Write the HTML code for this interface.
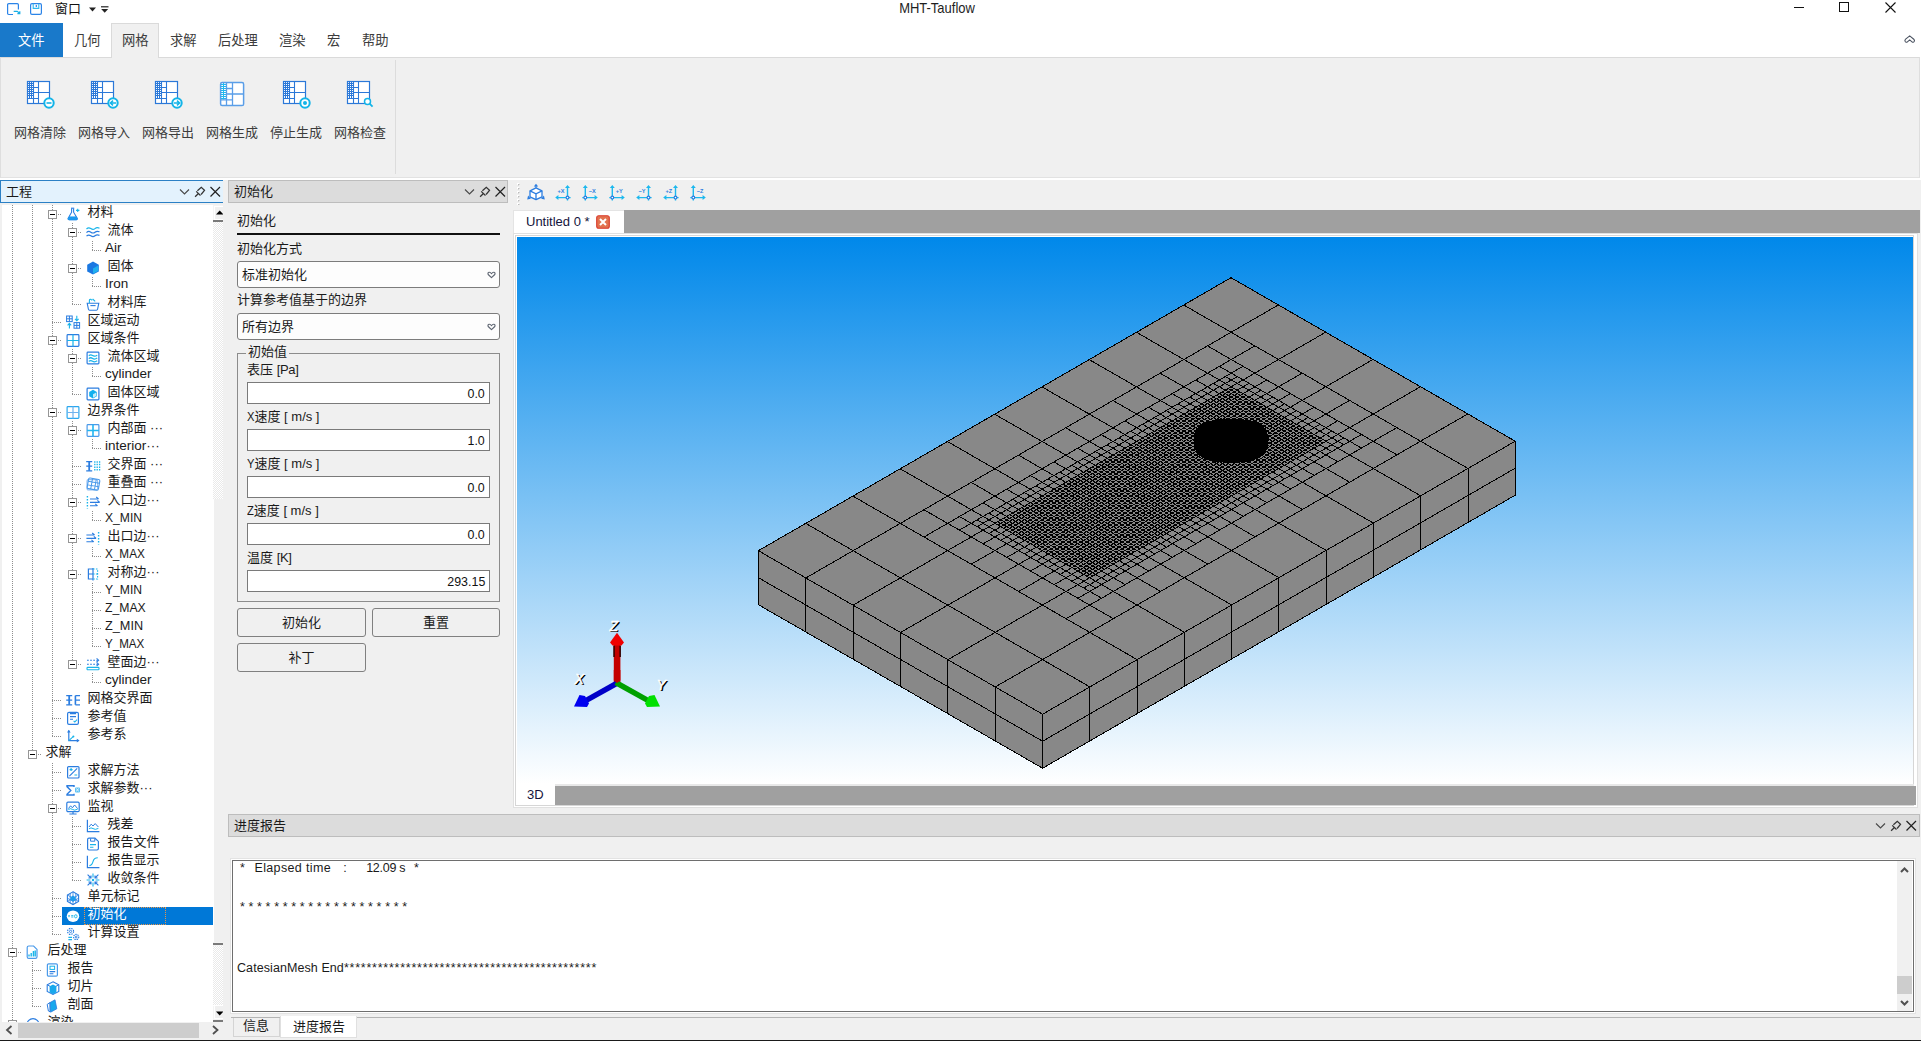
<!DOCTYPE html>
<html lang="zh-CN"><head><meta charset="utf-8"><title>MHT-Tauflow</title>
<style>
*{box-sizing:border-box;margin:0;padding:0}
html,body{width:1921px;height:1041px;overflow:hidden;background:#fff}
body{position:relative;font-family:"Liberation Sans","Noto Sans CJK SC",sans-serif;font-size:13px;color:#1a1a1a;line-height:1}
.a{position:absolute}
.t{position:absolute;white-space:nowrap;line-height:18px;height:18px}
svg{position:absolute;overflow:visible}
.rl{position:absolute;top:124px;width:64px;text-align:center;font-size:13px;line-height:18px;color:#3c3c3c;white-space:nowrap}
.tab{position:absolute;top:32px;height:18px;line-height:18px;font-size:13.3px;color:#3c3c3c;white-space:nowrap}
.hdr{position:absolute;font-size:13px;line-height:18px;white-space:nowrap;color:#1a1a1a}
.inp{position:absolute;left:247px;width:243px;height:22px;background:#fff;border:1px solid #7a7a7a;text-align:right;padding-right:4px;font-size:13.5px;line-height:21px;color:#111}
.inp span{display:inline-block;transform:scaleX(.92);transform-origin:100% 50%}
.lab{position:absolute;font-size:13px;line-height:18px;white-space:nowrap;color:#1a1a1a}
.btn{position:absolute;height:29px;border:1px solid #808080;border-radius:3px;background:#f0f0f0;text-align:center;font-size:13px;line-height:27px;color:#1a1a1a}
.cmb{position:absolute;left:237px;width:263px;height:27px;border:1px solid #7c7c7c;border-radius:3px;background:#fdfdfd;font-size:13px;line-height:25px;padding-left:4px;color:#1a1a1a}
.tr{position:absolute;white-space:nowrap;font-size:13px;line-height:18px;height:18px;color:#1a1a1a}
.log{position:absolute;left:237px;font-size:12.5px;line-height:18px;white-space:pre;color:#1a1a1a}
</style></head>
<body>
<div class="a" style="left:0;top:178px;width:1921px;height:863px;background:#f0f0f0"></div>
<div class="a" style="left:0;top:178px;width:1921px;height:2px;background:#fff"></div>
<div class="a" style="left:228px;top:180px;width:280px;height:23px;background:#dcdcdc;border:1px solid #bdbdbd"></div>
<div class="hdr" style="left:234px;top:183px">初始化</div>
<svg style="left:463px;top:186px" width="44" height="12" viewBox="0 0 44 12"><path d="M2 3.500L6.500 8L11 3.500" fill="none" stroke="#4a4a4a" stroke-width="1.150"/><path d="M17.100 10.800L20.700 7.200M18.200 5.400L22.500 9.500M19.400 4.800L23.300 1.400L26.500 4.300L23.100 8.500" fill="none" stroke="#333" stroke-width="1.25"/><path d="M32.500 1L42 10.500M42 1L32.500 10.500" stroke="#222" stroke-width="1.2"/></svg>
<div class="lab" style="left:237px;top:211.5px">初始化</div>
<div class="a" style="left:237px;top:233px;width:263px;height:2px;background:#111"></div>
<div class="lab" style="left:237px;top:239.5px">初始化方式</div>
<div class="cmb" style="top:261px">标准初始化</div><svg style="left:486.6px;top:270.9px" width="9" height="8" viewBox="0 0 9 8"><path d="M4.500 6.700L1.200 3.500Q0.500 1.700 2 1.300Q3.500 1.100 4.500 2.700Q5.500 1.100 7 1.300Q8.500 1.700 7.800 3.500Z" fill="#fff" stroke="#5f6672" stroke-width="1.150" stroke-linejoin="round"/></svg>
<div class="lab" style="left:237px;top:291px">计算参考值基于的边界</div>
<div class="cmb" style="top:313px">所有边界</div><svg style="left:486.6px;top:322.9px" width="9" height="8" viewBox="0 0 9 8"><path d="M4.500 6.700L1.200 3.500Q0.500 1.700 2 1.300Q3.500 1.100 4.500 2.700Q5.500 1.100 7 1.300Q8.500 1.700 7.800 3.500Z" fill="#fff" stroke="#5f6672" stroke-width="1.150" stroke-linejoin="round"/></svg>
<div class="a" style="left:237px;top:353px;width:263px;height:249px;border:1px solid #8c8c8c"></div>
<div class="lab" style="left:246px;top:343px;background:#f0f0f0;padding:0 2px">初始值</div>
<div class="lab" style="left:247px;top:360.5px">表压 <span style="letter-spacing:-0.3px">[Pa]</span></div>
<div class="inp" style="top:382px"><span>0.0</span></div>
<div class="lab" style="left:247px;top:407.5px"><span style="display:inline-block;transform:scaleX(.86);transform-origin:0 50%;margin-right:-1.2px">X</span>速度 [ m/s ]</div>
<div class="inp" style="top:429px"><span>1.0</span></div>
<div class="lab" style="left:247px;top:454.5px"><span style="display:inline-block;transform:scaleX(.86);transform-origin:0 50%;margin-right:-1.2px">Y</span>速度 [ m/s ]</div>
<div class="inp" style="top:476px"><span>0.0</span></div>
<div class="lab" style="left:247px;top:501.5px"><span style="display:inline-block;transform:scaleX(.86);transform-origin:0 50%;margin-right:-1.2px">Z</span>速度 [ m/s ]</div>
<div class="inp" style="top:523px"><span>0.0</span></div>
<div class="lab" style="left:247px;top:548.5px">温度 <span style="letter-spacing:-0.3px">[K]</span></div>
<div class="inp" style="top:570px"><span>293.15</span></div>
<div class="btn" style="left:237px;top:608px;width:129px">初始化</div>
<div class="btn" style="left:372px;top:608px;width:128px">重置</div>
<div class="btn" style="left:237px;top:643px;width:129px">补丁</div>
<div class="a" style="left:0;top:0;width:1921px;height:57px;background:#fff"></div>
<svg style="left:7px;top:3px" width="14" height="13" viewBox="0 0 14 13"><path d="M6 11.5H1.8Q0.6 11.5 0.6 10.3V1.8Q0.6 0.6 1.8 0.6H10.2Q11.4 0.6 11.4 1.8V6.5" fill="none" stroke="#2b84e8" stroke-width="1.2"/><path d="M6.700 8.300H10.200L12.600 10.300M12.800 8.200V10.600H10.400" fill="none" stroke="#17aee6" stroke-width="1.200"/></svg>
<svg style="left:30px;top:3px" width="13" height="13" viewBox="0 0 13 13"><rect x="0.6" y="0.6" width="10.8" height="10.8" rx="1.4" fill="#fff" stroke="#2b84e8" stroke-width="1.2"/><path d="M3.2 0.8V5.4H8.8V0.8" fill="none" stroke="#2fb9ee" stroke-width="1.1"/><path d="M6.3 2V4" stroke="#2b84e8" stroke-width="1.2"/></svg>
<div class="t" style="left:55px;top:0px;font-size:13px;color:#111">窗口</div>
<svg style="left:88px;top:6px" width="22" height="8" viewBox="0 0 22 8"><path d="M1 1.5H8L4.5 5.5Z" fill="#222"/><path d="M13 0.8H20.5" stroke="#222" stroke-width="1.2"/><path d="M13.2 3H20.2L16.7 6.8Z" fill="#222"/></svg>
<div class="t" style="left:837px;top:-2.3px;width:200px;text-align:center;font-size:15px;line-height:20px;height:20px;color:#1e1e1e;transform:scaleX(.865)">MHT-Tauflow</div>
<svg style="left:1790px;top:0" width="110" height="16" viewBox="0 0 110 16"><path d="M4 7.5H14" stroke="#111" stroke-width="1"/><rect x="49.5" y="2.5" width="9" height="9" fill="none" stroke="#111" stroke-width="1"/><path d="M95.500 2.500L105.500 12.500M105.500 2.500L95.500 12.500" stroke="#111" stroke-width="1.1"/></svg>
<svg style="left:1904px;top:35px" width="12" height="9" viewBox="0 0 12 9"><path d="M1.2 6.5Q0.4 5.2 1.6 4.2L5.7 0.9L9.8 4.2Q11 5.2 10.2 6.5Q9.2 7.8 8 6.8L5.7 4.9L3.4 6.8Q2.2 7.8 1.2 6.5Z" fill="none" stroke="#4a5260" stroke-width="1.1"/></svg>
<div class="a" style="left:0;top:23px;width:63px;height:34.5px;background:#1979ca"></div>
<div class="tab" style="left:18px;color:#fff">文件</div>
<div class="a" style="left:0;top:57px;width:1920px;height:121px;background:#f0f0f0;border-top:1px solid #dadada;border-left:1px solid #dedede;border-right:1px solid #dedede;border-bottom:1px solid #e2e2e2"></div>
<div class="a" style="left:111px;top:23px;width:48px;height:35px;background:#f0f0f0;border:1px solid #dadada;border-bottom:none"></div>
<div class="tab" style="left:74px">几何</div>
<div class="tab" style="left:122px">网格</div>
<div class="tab" style="left:170px">求解</div>
<div class="tab" style="left:218px">后处理</div>
<div class="tab" style="left:279px">渲染</div>
<div class="tab" style="left:327px">宏</div>
<div class="tab" style="left:362px">帮助</div>
<svg style="left:27px;top:81px" width="34" height="34" viewBox="0 0 34 34"><rect x="0.5" y="0.5" width="22" height="22" fill="#fff" stroke="#2b78d8" stroke-width="1.2"/><g stroke="#2b78d8" stroke-width="1" fill="none"><path d="M2.5 1V17.5"/><path d="M4.5 1V17.5"/><path d="M1 2.5H6.5"/><path d="M1 4.5H6.5"/><path d="M1 6.5H6.5"/><path d="M1 8.5H6.5"/><path d="M1 10.5H6.5"/><path d="M1 12.5H6.5"/><path d="M1 14.5H6.5"/><path d="M6.5 1V22.5M11.5 1V22.5M1 17.5H11.5M6.5 6.5H11.5M6.5 11.5H22.5" stroke-width="1.1"/></g><circle cx="22" cy="22" r="4.7" fill="#fff" stroke="#13b4e8" stroke-width="2"/><path d="M19.5 22H24.5" stroke="#13b4e8" stroke-width="1.6"/></svg>
<div class="rl" style="left:8px">网格清除</div>
<svg style="left:91px;top:81px" width="34" height="34" viewBox="0 0 34 34"><rect x="0.5" y="0.5" width="22" height="22" fill="#fff" stroke="#2b78d8" stroke-width="1.2"/><g stroke="#2b78d8" stroke-width="1" fill="none"><path d="M2.5 1V17.5"/><path d="M4.5 1V17.5"/><path d="M1 2.5H6.5"/><path d="M1 4.5H6.5"/><path d="M1 6.5H6.5"/><path d="M1 8.5H6.5"/><path d="M1 10.5H6.5"/><path d="M1 12.5H6.5"/><path d="M1 14.5H6.5"/><path d="M6.5 1V22.5M11.5 1V22.5M1 17.5H11.5M6.5 6.5H11.5M6.5 11.5H22.5" stroke-width="1.1"/></g><circle cx="22" cy="22" r="4.7" fill="#fff" stroke="#13b4e8" stroke-width="2"/><path d="M25 22H20M22 19.6L19.4 22L22 24.4" stroke="#13b4e8" stroke-width="1.5" fill="none"/></svg>
<div class="rl" style="left:72px">网格导入</div>
<svg style="left:155px;top:81px" width="34" height="34" viewBox="0 0 34 34"><rect x="0.5" y="0.5" width="22" height="22" fill="#fff" stroke="#2b78d8" stroke-width="1.2"/><g stroke="#2b78d8" stroke-width="1" fill="none"><path d="M2.5 1V17.5"/><path d="M4.5 1V17.5"/><path d="M1 2.5H6.5"/><path d="M1 4.5H6.5"/><path d="M1 6.5H6.5"/><path d="M1 8.5H6.5"/><path d="M1 10.5H6.5"/><path d="M1 12.5H6.5"/><path d="M1 14.5H6.5"/><path d="M6.5 1V22.5M11.5 1V22.5M1 17.5H11.5M6.5 6.5H11.5M6.5 11.5H22.5" stroke-width="1.1"/></g><circle cx="22" cy="22" r="4.7" fill="#fff" stroke="#13b4e8" stroke-width="2"/><path d="M19 22H24M22 19.6L24.6 22L22 24.4" stroke="#13b4e8" stroke-width="1.5" fill="none"/></svg>
<div class="rl" style="left:136px">网格导出</div>
<svg style="left:220px;top:81px" width="34" height="34" viewBox="0 0 34 34"><rect x="0.600" y="1.600" width="23" height="23" rx="1.600" fill="#fff" stroke="#5a9ee8" stroke-width="1.500"/><g stroke="#22b8ee" stroke-width="1" fill="none"><path d="M3.500 2V18.500"/><path d="M1 3.5H6.500"/><path d="M1 5.5H6.500"/><path d="M1 7.5H6.500"/><path d="M1 9.5H6.500"/><path d="M1 11.5H6.500"/><path d="M1 13.5H6.500"/><path d="M1 15.5H6.500"/><path d="M1 17.5H6.500"/></g><g stroke="#5a9ee8" stroke-width="1.300" fill="none"><path d="M12.500 2V24.500M6.500 2V24.500M12.500 13H23.500M6.500 7.500H12.500M6.500 13H12.500M1 18.800H12.500"/></g></svg>
<div class="rl" style="left:200px">网格生成</div>
<svg style="left:283px;top:81px" width="34" height="34" viewBox="0 0 34 34"><rect x="0.5" y="0.5" width="22" height="22" fill="#fff" stroke="#2b78d8" stroke-width="1.2"/><g stroke="#2b78d8" stroke-width="1" fill="none"><path d="M2.5 1V17.5"/><path d="M4.5 1V17.5"/><path d="M1 2.5H6.5"/><path d="M1 4.5H6.5"/><path d="M1 6.5H6.5"/><path d="M1 8.5H6.5"/><path d="M1 10.5H6.5"/><path d="M1 12.5H6.5"/><path d="M1 14.5H6.5"/><path d="M6.5 1V22.5M11.5 1V22.5M1 17.5H11.5M6.5 6.5H11.5M6.5 11.5H22.5" stroke-width="1.1"/></g><circle cx="22" cy="22" r="4.7" fill="#fff" stroke="#13b4e8" stroke-width="2"/><circle cx="22" cy="22" r="2" fill="#13b4e8"/></svg>
<div class="rl" style="left:264px">停止生成</div>
<svg style="left:347px;top:81px" width="34" height="34" viewBox="0 0 34 34"><rect x="0.5" y="0.5" width="22" height="22" fill="#fff" stroke="#2b78d8" stroke-width="1.2"/><g stroke="#2b78d8" stroke-width="1" fill="none"><path d="M2.5 1V17.5"/><path d="M4.5 1V17.5"/><path d="M1 2.5H6.5"/><path d="M1 4.5H6.5"/><path d="M1 6.5H6.5"/><path d="M1 8.5H6.5"/><path d="M1 10.5H6.5"/><path d="M1 12.5H6.5"/><path d="M1 14.5H6.5"/><path d="M6.5 1V22.5M11.5 1V22.5M1 17.5H11.5M6.5 6.5H11.5M6.5 11.5H22.5" stroke-width="1.1"/></g><circle cx="20.5" cy="20.5" r="3" fill="#fff" stroke="#13b4e8" stroke-width="1.5"/><path d="M22.8 22.8L25.6 25.6" stroke="#13b4e8" stroke-width="1.8"/></svg>
<div class="rl" style="left:328px">网格检查</div>
<div class="a" style="left:395px;top:60px;width:1px;height:114px;background:#dcdcdc"></div>
<div class="a" style="left:0;top:180px;width:223px;height:23px;background:#e3f2fd;border:1px solid #2b80c5;border-right:none"></div>
<div class="hdr" style="left:6px;top:183px">工程</div>
<svg style="left:178px;top:186px" width="44" height="12" viewBox="0 0 44 12"><path d="M2 3.500L6.500 8L11 3.500" fill="none" stroke="#4a4a4a" stroke-width="1.150"/><path d="M17.100 10.800L20.700 7.200M18.200 5.400L22.500 9.500M19.400 4.800L23.300 1.400L26.500 4.300L23.100 8.500" fill="none" stroke="#333" stroke-width="1.25"/><path d="M32.500 1L42 10.500M42 1L32.500 10.500" stroke="#222" stroke-width="1.2"/></svg>
<div class="a" style="left:2px;top:205px;width:221px;height:817px;background:#fff;overflow:hidden"></div>
<div class="a" id="treeclip" style="left:0;top:205px;width:213px;height:817px;overflow:hidden">
<div class="a" style="left:0;top:-205px;width:214px;height:1100px">
<div class="a" style="left:62px;top:907px;width:151px;height:18px;background:#0078d7"></div>
<div class="a" style="left:84px;top:907px;width:82px;height:18px;border:1px dotted #e8964a"></div>
<svg style="left:0;top:0" width="214" height="1100" shape-rendering="crispEdges"><path d="M12.5 205V1022M32.5 205V754M32.5 961V1006M52.5 205V736M52.5 763V934M72.5 223V304M72.5 349V394M72.5 421V664M72.5 817V880M92.5 241V250M92.5 277V286M92.5 367V376M92.5 439V448M92.5 511V520M92.5 547V556M92.5 583V646M92.5 673V682M58.0 214H61.0M78.0 232H81.0M92.0 250H101.0M78.0 268H81.0M92.0 286H101.0M72.0 304H81.0M52.0 322H61.0M58.0 340H61.0M78.0 358H81.0M92.0 376H101.0M72.0 394H81.0M58.0 412H61.0M78.0 430H81.0M92.0 448H101.0M72.0 466H81.0M72.0 484H81.0M78.0 502H81.0M92.0 520H101.0M78.0 538H81.0M92.0 556H101.0M78.0 574H81.0M92.0 592H101.0M92.0 610H101.0M92.0 628H101.0M92.0 646H101.0M78.0 664H81.0M92.0 682H101.0M52.0 700H61.0M52.0 718H61.0M52.0 736H61.0M38.0 754H41.0M52.0 772H61.0M52.0 790H61.0M58.0 808H61.0M72.0 826H81.0M72.0 844H81.0M72.0 862H81.0M72.0 880H81.0M52.0 898H61.0M52.0 916H61.0M52.0 934H61.0M18.0 952H21.0M32.0 970H41.0M32.0 988H41.0M32.0 1006H41.0M18.0 1024H21.0" fill="none" stroke="#8e8e8e" stroke-width="1" stroke-dasharray="1 1"/></svg>
<div class="a" style="left:48.0px;top:209.5px;width:9px;height:9px;border:1px solid #969696;background:#fff"></div><div class="a" style="left:50.0px;top:213.5px;width:5px;height:1px;background:#000"></div>
<svg style="left:66.0px;top:207px" width="14" height="14" viewBox="0 0 14 14"><path d="M5 1.2H8.2" stroke="#2b7de0" stroke-width="1.1"/><path d="M5.6 1.4V5.2L2.2 11.2Q1.7 12.6 3.1 12.6H10.3Q11.7 12.6 11.2 11.2L7.6 5.2V1.4" fill="none" stroke="#2b7de0" stroke-width="1.1"/><path d="M3.200 9.800H10.200L11.200 11.400Q11.500 12.800 10.300 12.800H3.100Q1.900 12.800 2.200 11.400Z" fill="#1a9af0" stroke="#1a9af0" stroke-width="0.600"/><path d="M10 3.4H13.4M11.7 1.7V5.1" stroke="#18b4ea" stroke-width="1.1"/></svg>
<div class="tr" style="left:87.5px;top:203px">材料</div>
<div class="a" style="left:68.0px;top:227.5px;width:9px;height:9px;border:1px solid #969696;background:#fff"></div><div class="a" style="left:70.0px;top:231.5px;width:5px;height:1px;background:#000"></div>
<svg style="left:86.0px;top:225px" width="14" height="14" viewBox="0 0 14 14"><path d="M0.5 4Q2.5 2 4.8 3.6T9 3.6T13.5 3.2" fill="none" stroke="#18b4ea" stroke-width="1.2"/><path d="M0.5 7.6Q2.5 5.6 4.8 7.2T9 7.2T13.5 6.8M0.5 11.2Q2.5 9.2 4.8 10.8T9 10.8T13.5 10.4" fill="none" stroke="#2b7de0" stroke-width="1.2"/></svg>
<div class="tr" style="left:107.5px;top:221px">流体</div>
<div class="tr" style="left:105.0px;top:239px;font-size:13.5px;transform-origin:0 50%;transform:scaleX(1)">Air</div>
<div class="a" style="left:68.0px;top:263.5px;width:9px;height:9px;border:1px solid #969696;background:#fff"></div><div class="a" style="left:70.0px;top:267.5px;width:5px;height:1px;background:#000"></div>
<svg style="left:86.0px;top:261px" width="14" height="14" viewBox="0 0 14 14"><path d="M7 0.6L12.8 3.8V10.4L7 13.6L1.2 10.4V3.8Z" fill="#1b78e2"/><path d="M7 7.4L12.2 4.6V10L7 12.8Z" fill="#20b0ee"/></svg>
<div class="tr" style="left:107.5px;top:257px">固体</div>
<div class="tr" style="left:105.0px;top:275px;font-size:13.5px;transform-origin:0 50%;transform:scaleX(1)">Iron</div>
<svg style="left:86.0px;top:297px" width="14" height="14" viewBox="0 0 14 14"><path d="M1.2 6.2H12.8L11.6 12.2Q11.4 13.2 10.4 13.2H3.6Q2.6 13.2 2.4 12.2Z" fill="none" stroke="#2b7de0" stroke-width="1.1"/><path d="M4.4 8.6H9.6" stroke="#2b7de0" stroke-width="1.1"/><path d="M3.4 6V3.6Q3.4 2 5 2.4L6.2 3.4M6.6 2L9.2 4.4" fill="none" stroke="#18b4ea" stroke-width="1.1"/></svg>
<div class="tr" style="left:107.5px;top:293px">材料库</div>
<svg style="left:66.0px;top:315px" width="14" height="14" viewBox="0 0 14 14"><rect x="0.6" y="1" width="5.6" height="5.6" fill="none" stroke="#2b7de0" stroke-width="1"/><path d="M3.4 1V6.6M0.6 3.8H6.2" stroke="#2b7de0" stroke-width="1"/><rect x="8" y="7.6" width="5.6" height="5.6" fill="none" stroke="#2b7de0" stroke-width="1"/><path d="M10.8 7.6V13.2M8 10.4H13.6" stroke="#2b7de0" stroke-width="1"/><path d="M10.8 0.8V5.6M9 3.8L10.8 5.8L12.6 3.8M3.4 13.4V8.6M1.6 10.4L3.4 8.4L5.2 10.4" fill="none" stroke="#18b4ea" stroke-width="1.1"/></svg>
<div class="tr" style="left:87.5px;top:311px">区域运动</div>
<div class="a" style="left:48.0px;top:335.5px;width:9px;height:9px;border:1px solid #969696;background:#fff"></div><div class="a" style="left:50.0px;top:339.5px;width:5px;height:1px;background:#000"></div>
<svg style="left:66.0px;top:333px" width="14" height="14" viewBox="0 0 14 14"><rect x="1.1" y="1.6" width="11.8" height="11.8" rx="0.8" fill="#fff" stroke="#2b7de0" stroke-width="1.2"/><path d="M7 1.6V13.4M1.1 7.5H12.9" stroke="#18b4ea" stroke-width="1.2"/></svg>
<div class="tr" style="left:87.5px;top:329px">区域条件</div>
<div class="a" style="left:68.0px;top:353.5px;width:9px;height:9px;border:1px solid #969696;background:#fff"></div><div class="a" style="left:70.0px;top:357.5px;width:5px;height:1px;background:#000"></div>
<svg style="left:86.0px;top:351px" width="14" height="14" viewBox="0 0 14 14"><rect x="1.1" y="1.1" width="11.8" height="11.8" rx="0.8" fill="#fff" stroke="#2b7de0" stroke-width="1.2"/><path d="M2.800 4.800Q4.600 3.200 6.600 4.600T11.200 4.200M2.800 7.600Q4.600 6 6.600 7.400T11.200 7M2.800 10.400Q4.600 8.800 6.600 10.200T11.200 9.800" fill="none" stroke="#18b4ea" stroke-width="1.250"/></svg>
<div class="tr" style="left:107.5px;top:347px">流体区域</div>
<div class="tr" style="left:105.0px;top:365px;font-size:13.5px;transform-origin:0 50%;transform:scaleX(1)">cylinder</div>
<svg style="left:86.0px;top:387px" width="14" height="14" viewBox="0 0 14 14"><rect x="1.1" y="1.1" width="11.8" height="11.8" rx="0.8" fill="#fff" stroke="#2b7de0" stroke-width="1.2"/><path d="M7 2.800L10.800 4.900V9.300L7 11.400L3.200 9.300V4.900Z" fill="#12b0ee"/><path d="M7 7.2L10.2 5.4V9L7 10.8Z" fill="#fff" opacity=".75"/></svg>
<div class="tr" style="left:107.5px;top:383px">固体区域</div>
<div class="a" style="left:48.0px;top:407.5px;width:9px;height:9px;border:1px solid #969696;background:#fff"></div><div class="a" style="left:50.0px;top:411.5px;width:5px;height:1px;background:#000"></div>
<svg style="left:66.0px;top:405px" width="14" height="14" viewBox="0 0 14 14"><rect x="1.1" y="1.6" width="11.8" height="11.8" rx="0.8" fill="#fff" stroke="#2aa7ee" stroke-width="1.2"/><path d="M7 1.6V13.4M1.1 7.5H12.9" stroke="#6fb2ee" stroke-width="1.2"/></svg>
<div class="tr" style="left:87.5px;top:401px">边界条件</div>
<div class="a" style="left:68.0px;top:425.5px;width:9px;height:9px;border:1px solid #969696;background:#fff"></div><div class="a" style="left:70.0px;top:429.5px;width:5px;height:1px;background:#000"></div>
<svg style="left:86.0px;top:423px" width="14" height="14" viewBox="0 0 14 14"><rect x="1.100" y="1.600" width="11.800" height="11.800" rx="0.800" fill="#fff" stroke="#4a9aea" stroke-width="1.200"/><path d="M7 1.600V13.400M1.100 7.500H12.900" stroke="#22b6f0" stroke-width="1.600"/></svg>
<div class="tr" style="left:107.5px;top:419px">内部面 ···</div>
<div class="tr" style="left:105.0px;top:437px;font-size:13.5px;transform-origin:0 50%;transform:scaleX(1)">interior···</div>
<svg style="left:86.0px;top:459px" width="14" height="14" viewBox="0 0 14 14"><path d="M0.200 2.600H6.200M0.200 11.800H6.200M0.200 7.200H6.200" stroke="#2b7de0" stroke-width="1.200"/><path d="M3.200 2.600V11.800" stroke="#2b7de0" stroke-width="1.800"/><path d="M8.800 2.200V12.200M11.200 2.200V12.200M13.600 2.200V12.200" stroke="#18b4ea" stroke-width="1.300" stroke-dasharray="1.500 1.100"/></svg>
<div class="tr" style="left:107.5px;top:455px">交界面 ···</div>
<svg style="left:86.0px;top:477px" width="14" height="14" viewBox="0 0 14 14"><rect x="1" y="2.600" width="10.600" height="10.400" rx="1.400" fill="none" stroke="#8fbdf2" stroke-width="1.100"/><g transform="rotate(10 7 7)"><rect x="1.800" y="1.600" width="11.400" height="10.800" rx="1.400" fill="none" stroke="#4a9aea" stroke-width="1.100"/><path d="M1.800 5.200H13.200M1.800 8.800H13.200M5.600 1.600V12.400M9.400 1.600V12.400" stroke="#4a9aea" stroke-width="1"/></g></svg>
<div class="tr" style="left:107.5px;top:473px">重叠面 ···</div>
<div class="a" style="left:68.0px;top:497.5px;width:9px;height:9px;border:1px solid #969696;background:#fff"></div><div class="a" style="left:70.0px;top:501.5px;width:5px;height:1px;background:#000"></div>
<svg style="left:86.0px;top:495px" width="14" height="14" viewBox="0 0 14 14"><path d="M1.4 1V13.4" stroke="#18b4ea" stroke-width="1.4" stroke-dasharray="1.6 1.4"/><path d="M4 4H12.4M10.2 2L12.6 4M4 7.4H13.6M11.4 5.4L13.8 7.4M4 10.8H11.4M9.2 8.8L11.6 10.8" fill="none" stroke="#2b7de0" stroke-width="1.1"/></svg>
<div class="tr" style="left:107.5px;top:491px">入口边···</div>
<div class="tr" style="left:105.0px;top:509px;font-size:13.5px;transform-origin:0 50%;transform:scaleX(0.9)">X_MIN</div>
<div class="a" style="left:68.0px;top:533.5px;width:9px;height:9px;border:1px solid #969696;background:#fff"></div><div class="a" style="left:70.0px;top:537.5px;width:5px;height:1px;background:#000"></div>
<svg style="left:86.0px;top:531px" width="14" height="14" viewBox="0 0 14 14"><path d="M12.6 1V13.4" stroke="#18b4ea" stroke-width="1.4" stroke-dasharray="1.6 1.4"/><path d="M0.4 4H8.4M6.2 2L8.6 4M0.4 7.4H10M7.8 5.4L10.2 7.4M0.4 10.8H7.6M5.4 8.8L7.8 10.8" fill="none" stroke="#2b7de0" stroke-width="1.1"/></svg>
<div class="tr" style="left:107.5px;top:527px">出口边···</div>
<div class="tr" style="left:105.0px;top:545px;font-size:13.5px;transform-origin:0 50%;transform:scaleX(0.87)">X_MAX</div>
<div class="a" style="left:68.0px;top:569.5px;width:9px;height:9px;border:1px solid #969696;background:#fff"></div><div class="a" style="left:70.0px;top:573.5px;width:5px;height:1px;background:#000"></div>
<svg style="left:86.0px;top:567px" width="14" height="14" viewBox="0 0 14 14"><path d="M7 2H2.4V12H7M2.4 7H7M7 1V13.4" fill="none" stroke="#2b7de0" stroke-width="1.2"/><path d="M7 2H11.6V12H7M7 7H11.6" fill="none" stroke="#18b4ea" stroke-width="1.1" stroke-dasharray="1.6 1.3"/></svg>
<div class="tr" style="left:107.5px;top:563px">对称边···</div>
<div class="tr" style="left:105.0px;top:581px;font-size:13.5px;transform-origin:0 50%;transform:scaleX(0.9)">Y_MIN</div>
<div class="tr" style="left:105.0px;top:599px;font-size:13.5px;transform-origin:0 50%;transform:scaleX(0.905)">Z_MAX</div>
<div class="tr" style="left:105.0px;top:617px;font-size:13.5px;transform-origin:0 50%;transform:scaleX(0.94)">Z_MIN</div>
<div class="tr" style="left:105.0px;top:635px;font-size:13.5px;transform-origin:0 50%;transform:scaleX(0.86)">Y_MAX</div>
<div class="a" style="left:68.0px;top:659.5px;width:9px;height:9px;border:1px solid #969696;background:#fff"></div><div class="a" style="left:70.0px;top:663.5px;width:5px;height:1px;background:#000"></div>
<svg style="left:86.0px;top:657px" width="14" height="14" viewBox="0 0 14 14"><path d="M1 3.2H12M1 7.2H12" stroke="#2b7de0" stroke-width="1.1" stroke-dasharray="1.8 1.3"/><path d="M10.6 1.4L12.6 3.2L10.6 5M10.6 5.4L12.6 7.2L10.6 9" fill="none" stroke="#2b7de0" stroke-width="1.1"/><rect x="1" y="10.4" width="12" height="2.4" rx="0.8" fill="#fff" stroke="#18b4ea" stroke-width="1.1"/></svg>
<div class="tr" style="left:107.5px;top:653px">壁面边···</div>
<div class="tr" style="left:105.0px;top:671px;font-size:13.5px;transform-origin:0 50%;transform:scaleX(1)">cylinder</div>
<svg style="left:66.0px;top:693px" width="14" height="14" viewBox="0 0 14 14"><path d="M0.200 2.600H6.200M0.200 11.800H6.200M0.200 7.200H6.200" stroke="#2b7de0" stroke-width="1.200"/><path d="M3.200 2.600V11.800" stroke="#2b7de0" stroke-width="1.800"/><path d="M9.400 2.600V11.800" stroke="#2b7de0" stroke-width="1.600"/><path d="M9.400 2.600H14M9.400 7.200H14M9.400 11.800H14" fill="none" stroke="#2b7de0" stroke-width="1.200"/></svg>
<div class="tr" style="left:87.5px;top:689px">网格交界面</div>
<svg style="left:66.0px;top:711px" width="14" height="14" viewBox="0 0 14 14"><rect x="1.6" y="1.4" width="10.8" height="12" rx="1.4" fill="#fff" stroke="#2b7de0" stroke-width="1.2"/><path d="M4.4 1.2V2.6H9.6V1.2" fill="none" stroke="#2b7de0" stroke-width="1.1"/><path d="M4 5.6H10M4 8.2H7" stroke="#2b7de0" stroke-width="1.1"/><path d="M7.6 9.8L8.8 11L11 8.6" fill="none" stroke="#18b4ea" stroke-width="1.1"/></svg>
<div class="tr" style="left:87.5px;top:707px">参考值</div>
<svg style="left:66.0px;top:729px" width="14" height="14" viewBox="0 0 14 14"><path d="M2.8 1.4V11.6H12.4" fill="none" stroke="#2b7de0" stroke-width="1.2"/><path d="M1 3.4L2.8 0.8L4.6 3.4ZM10.8 9.8L13.6 11.6L10.8 13.4Z" fill="#2b7de0"/><path d="M2.8 11.6L7.2 7.6" stroke="#18b4ea" stroke-width="1.1"/><circle cx="7.4" cy="7.4" r="1" fill="#18b4ea"/></svg>
<div class="tr" style="left:87.5px;top:725px">参考系</div>
<div class="a" style="left:28.0px;top:749.5px;width:9px;height:9px;border:1px solid #969696;background:#fff"></div><div class="a" style="left:30.0px;top:753.5px;width:5px;height:1px;background:#000"></div>
<div class="tr" style="left:45.5px;top:743px">求解</div>
<svg style="left:66.0px;top:765px" width="14" height="14" viewBox="0 0 14 14"><rect x="1.6" y="1.6" width="11.4" height="11.4" rx="1" fill="#fff" stroke="#2b7de0" stroke-width="1.2"/><path d="M3.4 11.2L11.2 3.4" stroke="#2b7de0" stroke-width="1.1"/><path d="M3.6 4.6H6.6M5.1 3.1V6.1M8.4 10H11.2" stroke="#18b4ea" stroke-width="1.1"/></svg>
<div class="tr" style="left:87.5px;top:761px">求解方法</div>
<svg style="left:66.0px;top:783px" width="14" height="14" viewBox="0 0 14 14"><path d="M8 4V2.800H1V3.600L4.800 7.400L1 11.200V12H8V10.800" fill="none" stroke="#2b7de0" stroke-width="1.400"/><rect x="9" y="4.400" width="5" height="5" rx="1" fill="#5cc0f2"/><path d="M10.200 5.600L12.800 8.200M12.800 5.600L10.200 8.200" stroke="#fff" stroke-width="0.900"/></svg>
<div class="tr" style="left:87.5px;top:779px">求解参数···</div>
<div class="a" style="left:48.0px;top:803.5px;width:9px;height:9px;border:1px solid #969696;background:#fff"></div><div class="a" style="left:50.0px;top:807.5px;width:5px;height:1px;background:#000"></div>
<svg style="left:66.0px;top:801px" width="14" height="14" viewBox="0 0 14 14"><rect x="0.8" y="1.2" width="12.4" height="9.4" rx="1.2" fill="#fff" stroke="#2b7de0" stroke-width="1.2"/><path d="M7 10.6V12.8M3.4 13H10.6" stroke="#2b7de0" stroke-width="1.2"/><path d="M2.4 7.6L4.6 4.8L6.4 6.8L8.6 4L11.6 7.6" fill="none" stroke="#2b7de0" stroke-width="1"/><path d="M2.4 8.6Q4.4 6.8 6.4 8.4T11.6 8.2" fill="none" stroke="#18b4ea" stroke-width="1"/></svg>
<div class="tr" style="left:87.5px;top:797px">监视</div>
<svg style="left:86.0px;top:819px" width="14" height="14" viewBox="0 0 14 14"><path d="M1.4 0.8V12.6H13.4" fill="none" stroke="#2b7de0" stroke-width="1.2"/><path d="M3 8L5.2 5.2L7 7L9.2 4.6L12.4 8" fill="none" stroke="#2b7de0" stroke-width="1"/><path d="M3 9.8Q5 8 7 9.6T12.4 9.4" fill="none" stroke="#18b4ea" stroke-width="1"/></svg>
<div class="tr" style="left:107.5px;top:815px">残差</div>
<svg style="left:86.0px;top:837px" width="14" height="14" viewBox="0 0 14 14"><path d="M1.6 2.6Q1.6 1.2 3 1.2H9L12.4 4.4V11.6Q12.4 13 11 13H3Q1.6 13 1.6 11.6Z" fill="#fff" stroke="#2b7de0" stroke-width="1.2"/><path d="M4.6 1.4V4.2H8.8V1.6" fill="none" stroke="#2b7de0" stroke-width="1"/><path d="M4 7.6H10M4 10.2H7.4" stroke="#18b4ea" stroke-width="1.1"/></svg>
<div class="tr" style="left:107.5px;top:833px">报告文件</div>
<svg style="left:86.0px;top:855px" width="14" height="14" viewBox="0 0 14 14"><path d="M1.4 0.8V12.6H13.4" fill="none" stroke="#2b7de0" stroke-width="1.2"/><path d="M3.4 10.6Q6 10.4 7 6.6T11.8 2.8" fill="none" stroke="#18b4ea" stroke-width="1.1"/></svg>
<div class="tr" style="left:107.5px;top:851px">报告显示</div>
<svg style="left:86.0px;top:873px" width="14" height="14" viewBox="0 0 14 14"><path d="M7 0.6V4.4M7 13.4V9.6M0.6 7H4.4M13.4 7H9.6" stroke="#18b4ea" stroke-width="1.1"/><path d="M1.6 1.6L5 5M5 2.4V5H2.4M12.4 1.6L9 5M9 2.4V5H11.6M1.6 12.4L5 9M5 11.6V9H2.4M12.4 12.4L9 9M9 11.6V9H11.6" fill="none" stroke="#2b7de0" stroke-width="1.1"/><circle cx="7" cy="7" r="1.2" fill="#18b4ea"/></svg>
<div class="tr" style="left:107.5px;top:869px">收敛条件</div>
<svg style="left:66.0px;top:891px" width="14" height="14" viewBox="0 0 14 14"><path d="M7 0.8L12.6 4V10.4L7 13.6L1.4 10.4V4Z" fill="#fff" stroke="#2b7de0" stroke-width="1.1"/><path d="M7 0.8V13.6M1.4 4L12.6 10.4M12.6 4L1.4 10.4M4.2 2.4L4.2 12M9.8 2.4V12M1.4 7.2L7 10.4L12.6 7.2" fill="none" stroke="#2b7de0" stroke-width="0.8"/><path d="M7 4.6L9.6 6.2V9L7 10.6L4.4 9V6.2Z" fill="#1b9cec"/></svg>
<div class="tr" style="left:87.5px;top:887px">单元标记</div>
<svg style="left:66.0px;top:909px" width="14" height="14" viewBox="0 0 14 14"><ellipse cx="7" cy="7.2" rx="6.2" ry="5.8" fill="#fff"/><path d="M3 6.2V8.2M2.4 6.8H3.8M5.2 6.6H7.4M5.2 8H7.4" stroke="#18b4ea" stroke-width="0.9"/><ellipse cx="9.8" cy="7.3" rx="1.3" ry="1.6" fill="none" stroke="#18b4ea" stroke-width="0.9"/></svg>
<div class="tr" style="left:87.5px;top:905px;color:#fff">初始化</div>
<svg style="left:66.0px;top:927px" width="14" height="14" viewBox="0 0 14 14"><circle cx="4.6" cy="4.4" r="3" fill="#fff" stroke="#2b7de0" stroke-width="1.1" stroke-dasharray="1.5 0.9"/><circle cx="4.6" cy="4.4" r="1.1" fill="none" stroke="#2b7de0" stroke-width="0.9"/><circle cx="10.2" cy="10" r="2.6" fill="#fff" stroke="#2b7de0" stroke-width="1.1" stroke-dasharray="1.4 0.8"/><circle cx="10.2" cy="10" r="0.9" fill="none" stroke="#2b7de0" stroke-width="0.9"/><path d="M2.4 10.4H6M2.4 12.6H6" stroke="#18b4ea" stroke-width="1.1"/></svg>
<div class="tr" style="left:87.5px;top:923px">计算设置</div>
<div class="a" style="left:8.0px;top:947.5px;width:9px;height:9px;border:1px solid #969696;background:#fff"></div><div class="a" style="left:10.0px;top:951.5px;width:5px;height:1px;background:#000"></div>
<svg style="left:26.0px;top:945px" width="14" height="14" viewBox="0 0 14 14"><path d="M1.2 2.6Q1.2 1 2.8 1H7.6L11 4.4V11.8Q11 13.4 9.4 13.4H2.8Q1.2 13.4 1.2 11.8Z" fill="#fff" stroke="#4a9aea" stroke-width="1.2"/><path d="M3 11.4V9.6M5.2 11.4V8M7.4 11.4V6M9.2 11.4V5.4" stroke="#18b4ea" stroke-width="1.4"/></svg>
<div class="tr" style="left:47.5px;top:941px">后处理</div>
<svg style="left:46.0px;top:963px" width="14" height="14" viewBox="0 0 14 14"><rect x="1.4" y="0.8" width="10" height="12.4" rx="1.2" fill="#fff" stroke="#4a9aea" stroke-width="1.2"/><rect x="4" y="3.2" width="4.6" height="3.2" fill="none" stroke="#18b4ea" stroke-width="1"/><path d="M3.6 8.6H9.2M3.6 10.8H7.4" stroke="#2b7de0" stroke-width="1.1"/></svg>
<div class="tr" style="left:67.5px;top:959px">报告</div>
<svg style="left:46.0px;top:981px" width="14" height="14" viewBox="0 0 14 14"><path d="M7 0.8L12.8 3.8V10.4L7 13.4L1.2 10.4V3.8Z" fill="#fff" stroke="#2b7de0" stroke-width="1.1"/><path d="M1.2 3.8L7 6.8L12.8 3.8M7 6.8V13.4" fill="none" stroke="#2b7de0" stroke-width="1"/><path d="M3.6 5.2L7 3.4L10.4 5.2V11.4L7 13L3.6 11.4Z" fill="#18a8ec"/></svg>
<div class="tr" style="left:67.5px;top:977px">切片</div>
<svg style="left:46.0px;top:999px" width="14" height="14" viewBox="0 0 14 14"><path d="M1.2 5.4L4 3.6V12.8L2.4 12Z" fill="#fff" stroke="#2b7de0" stroke-width="1"/><path d="M4 3.6L9 0.8L10.8 9.8L4.6 13.2Z" fill="#18a8ec" stroke="#2b7de0" stroke-width="0.8"/></svg>
<div class="tr" style="left:67.5px;top:995px">剖面</div>
<div class="a" style="left:8.0px;top:1019.5px;width:9px;height:9px;border:1px solid #969696;background:#fff"></div><div class="a" style="left:10.0px;top:1023.5px;width:5px;height:1px;background:#000"></div>
<svg style="left:26.0px;top:1017px" width="14" height="14" viewBox="0 0 14 14"><circle cx="7" cy="7.6" r="6" fill="#fff" stroke="#2b7de0" stroke-width="1.2"/></svg>
<div class="tr" style="left:47.5px;top:1013px">渲染</div>
</div></div>
<div class="a" style="left:213px;top:205px;width:10px;height:817px;background:#f4f4f4;overflow:hidden"><div class="a" style="left:0;top:17px;width:10px;height:277px;background-image:conic-gradient(#fff 25%,#e9e9e9 0 50%,#fff 0 75%,#e9e9e9 0);background-size:2px 2px"></div><div class="a" style="left:0;top:294px;width:10px;height:443px;background:#f0f0f0;border-left:1px solid #fff"></div><div class="a" style="left:0;top:741px;width:10px;height:60px;background-image:conic-gradient(#fff 25%,#e9e9e9 0 50%,#fff 0 75%,#e9e9e9 0);background-size:2px 2px"></div><div class="a" style="left:0;top:15px;width:10px;height:2px;background:#7a7a7a"></div><div class="a" style="left:0;top:738px;width:10px;height:2px;background:#7a7a7a"></div><div class="a" style="left:0;top:815px;width:10px;height:2px;background:#7a7a7a"></div><div class="a" style="left:1px;top:1px;width:9px;height:14px;background:#f0f0f0;border:1px solid #fff;border-right:none"></div><div class="a" style="left:1px;top:800px;width:9px;height:14px;background:#f0f0f0;border:1px solid #fff;border-right:none"></div><svg style="left:2.5px;top:5px" width="7" height="5" viewBox="0 0 7 5"><path d="M0 4.5H7.500L3.700 0.500Z" fill="#000"/></svg><svg style="left:2.5px;top:805.5px" width="7" height="5" viewBox="0 0 7 5"><path d="M0 0.500H7.500L3.700 4.500Z" fill="#000"/></svg></div>
<div class="a" style="left:0;top:1022px;width:224px;height:18px;background:#f0f0f0"></div>
<div class="a" style="left:18px;top:1023px;width:181px;height:15px;background:#cdcdcd"></div>
<svg style="left:5px;top:1025px" width="216" height="10" viewBox="0 0 216 10"><path d="M6.500 1L2 5L6.500 9M208 1L212.500 5L208 9" fill="none" stroke="#505050" stroke-width="1.8"/></svg>
<div class="a" style="left:517px;top:183px;width:3px;height:22px;background-image:radial-gradient(circle at 1.6px 1.6px,#bcbcbc 0.8px,transparent 1px),radial-gradient(circle at 0.8px 0.8px,#fff 0.8px,transparent 1px);background-size:3px 4px"></div>
<svg style="left:527px;top:183px" width="19" height="18" viewBox="0 0 19 18"><path d="M9 4.800L15 7.800V13.800L9 16.700L3 13.800V7.800Z" fill="#fff" stroke="#2b7de0" stroke-width="1.300" stroke-linejoin="round"/><path d="M3 7.800L9 10.800L15 7.800M9 10.800V16.700" fill="none" stroke="#2b7de0" stroke-width="1.300"/><path d="M9 4.800V2.500" stroke="#2b7de0" stroke-width="1.200"/><path d="M6.800 3.400L9 0.700L11.200 3.400ZM0.200 16.600L1.100 12.500L3.900 15.700ZM17.800 16.600L16.900 12.500L14.100 15.700Z" fill="#2b7de0"/></svg>
<svg style="left:555px;top:183px" width="17" height="18" viewBox="0 0 17 18"><path d="M12.5 17.600V4M15.600 14.600H2.500" fill="none" stroke="#1cb8ee" stroke-width="1.400"/><path d="M10.0 5L12.5 2L15.0 5ZM3.400 12.100L0.200 14.600L3.400 17.100Z" fill="#1cb8ee"/><circle cx="12.5" cy="14.600" r="1.400" fill="#fff" stroke="#2b7de0" stroke-width="1.200"/><text x="2.6" y="9.800" font-size="5.600" font-weight="bold" font-family="Liberation Sans,sans-serif" fill="#2b7de0">+X</text></svg>
<svg style="left:582px;top:183px" width="17" height="18" viewBox="0 0 17 18"><path d="M3.3 17.600V4M0.300 14.600H13.500" fill="none" stroke="#1cb8ee" stroke-width="1.400"/><path d="M0.7999999999999998 5L3.3 2L5.8 5ZM12.600 12.100L15.800 14.600L12.600 17.100Z" fill="#1cb8ee"/><circle cx="3.3" cy="14.600" r="1.400" fill="#fff" stroke="#2b7de0" stroke-width="1.200"/><text x="6.8" y="9.800" font-size="5.600" font-weight="bold" font-family="Liberation Sans,sans-serif" fill="#2b7de0">−X</text></svg>
<svg style="left:609px;top:183px" width="17" height="18" viewBox="0 0 17 18"><path d="M3.3 17.600V4M0.300 14.600H13.500" fill="none" stroke="#1cb8ee" stroke-width="1.400"/><path d="M0.7999999999999998 5L3.3 2L5.8 5ZM12.600 12.100L15.800 14.600L12.600 17.100Z" fill="#1cb8ee"/><circle cx="3.3" cy="14.600" r="1.400" fill="#fff" stroke="#2b7de0" stroke-width="1.200"/><text x="6.8" y="9.800" font-size="5.600" font-weight="bold" font-family="Liberation Sans,sans-serif" fill="#2b7de0">+Y</text></svg>
<svg style="left:636px;top:183px" width="17" height="18" viewBox="0 0 17 18"><path d="M12.5 17.600V4M15.600 14.600H2.500" fill="none" stroke="#1cb8ee" stroke-width="1.400"/><path d="M10.0 5L12.5 2L15.0 5ZM3.400 12.100L0.200 14.600L3.400 17.100Z" fill="#1cb8ee"/><circle cx="12.5" cy="14.600" r="1.400" fill="#fff" stroke="#2b7de0" stroke-width="1.200"/><text x="2.6" y="9.800" font-size="5.600" font-weight="bold" font-family="Liberation Sans,sans-serif" fill="#2b7de0">−Y</text></svg>
<svg style="left:663px;top:183px" width="17" height="18" viewBox="0 0 17 18"><path d="M12.5 17.600V4M15.600 14.600H2.500" fill="none" stroke="#1cb8ee" stroke-width="1.400"/><path d="M10.0 5L12.5 2L15.0 5ZM3.400 12.100L0.200 14.600L3.400 17.100Z" fill="#1cb8ee"/><circle cx="12.5" cy="14.600" r="1.400" fill="#fff" stroke="#2b7de0" stroke-width="1.200"/><text x="2.6" y="9.800" font-size="5.600" font-weight="bold" font-family="Liberation Sans,sans-serif" fill="#2b7de0">+Z</text></svg>
<svg style="left:690px;top:183px" width="17" height="18" viewBox="0 0 17 18"><path d="M3.3 17.600V4M0.300 14.600H13.500" fill="none" stroke="#1cb8ee" stroke-width="1.400"/><path d="M0.7999999999999998 5L3.3 2L5.8 5ZM12.600 12.100L15.800 14.600L12.600 17.100Z" fill="#1cb8ee"/><circle cx="3.3" cy="14.600" r="1.400" fill="#fff" stroke="#2b7de0" stroke-width="1.200"/><text x="6.8" y="9.800" font-size="5.600" font-weight="bold" font-family="Liberation Sans,sans-serif" fill="#2b7de0">−Z</text></svg>
<div class="a" style="left:514px;top:210px;width:1406px;height:23px;background:#a0a0a0"></div>
<div class="a" style="left:513px;top:210px;width:111px;height:24px;background:#fff;border-left:1px solid #e4e4e4;border-top:1px solid #e4e4e4"></div>
<div class="t" style="left:526px;top:213px;font-size:13px;color:#14143c">Untitled 0 *</div>
<svg style="left:596px;top:215px" width="14" height="14" viewBox="0 0 14 14"><rect x="0.700" y="0.700" width="12.600" height="12.600" rx="2" fill="#e2724f" stroke="#d93a2b" stroke-width="1.100"/><path d="M4 4L10 10M10 4L4 10" stroke="#fff" stroke-width="2"/></svg>
<div class="a" style="left:513px;top:233px;width:1405px;height:575px;background:#fff;border:1px solid #e0e0e0"></div>
<div class="a" style="left:515px;top:235px;width:1399px;height:571px;border:1px solid #d6d6d6;background:#fff"></div>
<div class="a" style="left:555px;top:786px;width:1361px;height:19px;background:#a0a0a0"></div>
<div class="a" style="left:555px;top:784px;width:1359px;height:2px;background:#e8e8e8"></div>
<div class="t" style="left:527px;top:786px;font-size:13px;color:#14143c">3D</div>
<svg style="left:517px;top:237px" width="1396" height="547" viewBox="0 0 1396 547" shape-rendering="crispEdges"><defs><linearGradient id="bg" x1="0" y1="0" x2="0" y2="1"><stop offset="0" stop-color="#0088ea"/><stop offset="1" stop-color="#ffffff"/></linearGradient></defs><rect x="0" y="0" width="1396" height="547" fill="url(#bg)"/><polygon points="714,40.7 998.2,204.2 998.2,258.2 525.6,531.2 241.4,367.7 241.4,313.7" fill="#888888" stroke="#000" stroke-width="1"/><path d="M241.4 340.7L525.6 504.2L998.2 231.2M241.4 367.7L525.6 531.2L998.2 258.2M241.4 313.7V367.7M288.8 341V395M336.1 368.2V422.2M383.5 395.5V449.5M430.9 422.7V476.7M478.2 450V504M525.6 477.2V531.2M998.2 204.2V258.2M951 231.5V285.5M903.7 258.8V312.8M856.4 286.1V340.1M809.2 313.4V367.4M761.9 340.7V394.7M714.7 368V422M667.4 395.3V449.3M620.1 422.6V476.6M572.9 449.9V503.9" fill="none" stroke="#000" stroke-width="1"/><path d="M794.2 195.8L557.9 332.3M808.7 95.2L336.1 368.2M737.8 108.9L407 300M903.5 149.7L430.9 422.7M746.8 168.5L510.5 305M761.4 67.9L288.8 341M723.1 154.9L486.8 291.4M749.7 143L466.1 306.8M782.3 189L546 325.5M726 129.3L442.4 293.1M998.2 204.2L525.6 477.2M758.6 175.3L522.3 311.8M856.1 122.4L383.5 395.5M714 40.7L241.4 313.7M785.2 136.1L454.3 327.2M806 202.6L569.7 339.1M803 187.3L543.1 337.4M779.3 173.6L519.4 323.8M800.1 199.2L563.8 335.7M740.9 165.1L504.6 301.6M950.8 176.9L478.2 450M717.2 151.5L480.9 288M797.1 170.2L513.5 334M879.9 190.6L549.1 381.7M773.4 156.6L489.8 320.4M734.9 161.7L498.6 298.2M720.1 139.6L460.2 289.7M832.5 163.4L501.7 354.5M814.9 194.1L554.9 344.2M791.2 180.4L531.2 330.6M826.7 200.9L566.8 351M770.5 182.2L534.2 318.7M767.5 166.8L507.6 317M788.2 192.4L551.9 328.9M764.6 178.8L528.3 315.3M844.4 197.5L560.9 361.3M820.7 183.8L537.2 347.6M755.6 160L495.7 310.2M752.7 171.9L516.4 308.4M743.8 153.2L483.9 303.3M732 146.4L472 296.5M776.4 185.6L540.1 322.1M729 158.3L492.7 294.8M610.8 209.5L705.6 264M634.5 195.9L729.2 250.4M575.4 230L670.1 284.5M590.1 207.8L708.6 276M507.4 255.6L625.9 323.7M666.7 68L951 231.5M531.1 241.9L649.5 310.1M288.7 286.4L572.9 449.9M678.7 143L820.8 224.8M554.7 228.3L673.1 296.4M702.4 129.3L844.5 211.1M510.4 267.5L605.2 322M572.2 122.6L856.4 286.1M714 40.7L998.2 204.2M643.2 136.2L832.7 245.2M383.2 231.8L667.4 395.3M622.7 202.7L717.4 257.2M454.2 245.4L643.7 354.4M563.6 236.8L658.3 291.3M587.2 223.2L681.9 277.7M442.4 279.5L584.5 361.2M687.6 165.2L782.4 219.7M711.3 151.5L806 206M631.5 170.3L773.6 252.1M534 253.9L628.8 308.4M655.1 156.6L797.2 238.4M548.7 190.8L738.2 299.8M557.7 240.2L652.4 294.7M525 149.9L809.2 313.4M498.6 274.4L593.3 328.9M596 163.5L785.4 272.5M466.1 265.9L608.2 347.6M486.8 281.2L581.5 335.7M335.9 259.1L620.1 422.6M406.9 272.7L596.4 381.7M241.4 313.7L525.6 477.2M542.9 235.1L661.3 303.2M619.5 95.3L903.7 258.8M566.5 221.5L684.9 289.6M690.5 108.9L880 217.9M522.2 260.7L617 315.2M545.9 247.1L640.6 301.6M646.3 189L741 243.5M669.9 175.4L764.7 229.9M489.7 252.2L631.8 334M599 216.3L693.8 270.8M495.6 262.4L614 330.5M477.7 177.2L761.9 340.7M607.8 183.9L749.9 265.7M578.3 214.6L696.7 282.8M602 201L720.4 269.1M705.4 154.9L800.1 209.4M430.4 204.5L714.7 368M480.9 284.6L575.6 339.1M613.8 194.2L732.2 262.3M637.4 180.5L755.8 248.6M658.1 182.2L752.8 236.7M681.7 168.6L776.5 223.1M492.7 277.8L587.4 332.3M513.3 238.5L655.4 320.3M625.6 187.4L744 255.5M649.2 173.7L767.6 241.8M569.5 233.4L664.2 287.9M593.1 219.8L687.9 274.3M693.5 161.7L788.3 216.2M501.4 218.1L690.9 327.1M581.3 226.6L676 281.1M604.9 212.9L699.7 267.4M672.8 160.1L791.3 228.2M536.9 224.9L679 306.6M516.3 264.1L611.1 318.6M616.7 206.1L711.5 260.6M560.6 211.2L702.7 293M584.2 197.6L726.3 279.4M628.6 199.3L723.3 253.8M504.5 270.9L599.2 325.4M528.1 257.3L622.9 311.8M483.8 269.2L602.2 337.4M661 166.9L779.5 235M684.7 153.2L803.1 221.4M664 178.8L758.7 233.3M708.3 139.6L826.7 207.7M539.9 250.5L634.7 305M519.2 248.8L637.7 316.9M460.2 282.9L578.6 351M696.5 146.4L814.9 214.5M699.5 158.3L794.2 212.8M640.4 192.5L735.1 247M472 276.1L590.4 344.2M551.8 243.6L646.5 298.1M652.2 185.6L746.9 240.1M675.8 172L770.6 226.5" fill="none" stroke="#000" stroke-width="1"/><polygon points="750.6,203.8 750.4,208.5 749.7,211.6 748.5,214.3 746.9,216.5 744.8,218.5 742.3,220.3 739.3,221.7 735.9,222.9 732,223.9 727.4,224.6 722.1,225 714,225.1 705.9,225 700.6,224.6 696,223.9 692.1,222.9 688.7,221.7 685.7,220.3 683.2,218.5 681.1,216.5 679.5,214.3 678.3,211.6 677.6,208.5 677.4,203.8 677.6,199.1 678.3,196 679.5,193.3 681.1,191.1 683.2,189.1 685.7,187.3 688.7,185.9 692.1,184.7 696,183.7 700.6,183 705.9,182.6 714,182.5 722.1,182.6 727.4,183 732,183.7 735.9,184.7 739.3,185.9 742.3,187.3 744.8,189.1 746.9,191.1 748.5,193.3 749.7,196 750.4,199.1" fill="#000" stroke="#000" stroke-width="1" stroke-linejoin="round"/></svg>
<svg style="left:560px;top:610px" width="120" height="110" viewBox="0 0 120 110"><defs><linearGradient id="gz" x1="0" x2="1"><stop offset="0" stop-color="#b00000"/><stop offset=".5" stop-color="#e00000"/><stop offset="1" stop-color="#a80000"/></linearGradient></defs><rect x="53.800" y="34" width="6.600" height="39" fill="#c40000"/><path d="M53.300 35.500H54.800V47H53.300ZM59.400 35.500H60.900V47H59.400Z" fill="#300000"/><path d="M57 22.800L64 32.500L61.500 35.500H52.500L50 32.500Z" fill="#f00000"/><path d="M57 70L59.500 75L27 93L24.500 88.200Z" fill="#0000c8"/><path d="M14 96.600L19.500 85L25 86L29 93.500L27 97Z" fill="#0000f0"/><path d="M57 70L54.500 75L87 93L89.500 88.200Z" fill="#00a000"/><path d="M100 96.600L94.500 85L89 86L85 93.500L87 97Z" fill="#00e000"/><path d="M53.800 70.500L57 73L60.400 70.500V60H53.800Z" fill="#c40000"/><text x="50.7" y="22.2" font-size="14" font-style="italic" font-weight="bold" font-family="Liberation Sans,sans-serif" fill="#000">Z</text><text x="49.5" y="21" font-size="14" font-style="italic" font-family="Liberation Sans,sans-serif" fill="#fff" stroke="#fff" stroke-width="0.5">Z</text><text x="15.7" y="75.2" font-size="14" font-style="italic" font-weight="bold" font-family="Liberation Sans,sans-serif" fill="#000">X</text><text x="14.5" y="74" font-size="14" font-style="italic" font-family="Liberation Sans,sans-serif" fill="#fff" stroke="#fff" stroke-width="0.5">X</text><text x="97.7" y="81.2" font-size="14" font-style="italic" font-weight="bold" font-family="Liberation Sans,sans-serif" fill="#000">Y</text><text x="96.5" y="80" font-size="14" font-style="italic" font-family="Liberation Sans,sans-serif" fill="#fff" stroke="#fff" stroke-width="0.5">Y</text></svg>
<div class="a" style="left:228px;top:814px;width:1692px;height:23px;background:#dcdcdc;border:1px solid #bdbdbd"></div>
<div class="hdr" style="left:234px;top:817px">进度报告</div>
<svg style="left:1874px;top:820px" width="44" height="12" viewBox="0 0 44 12"><path d="M2 3.500L6.500 8L11 3.500" fill="none" stroke="#4a4a4a" stroke-width="1.150"/><path d="M17.100 10.800L20.700 7.200M18.200 5.400L22.500 9.500M19.400 4.800L23.300 1.400L26.500 4.300L23.100 8.500" fill="none" stroke="#333" stroke-width="1.25"/><path d="M32.500 1L42 10.500M42 1L32.500 10.500" stroke="#222" stroke-width="1.2"/></svg>
<div class="a" style="left:230px;top:858px;width:1686px;height:156px;border:1px solid #e3e3e3;background:#fff"></div>
<div class="a" style="left:232px;top:860px;width:1682px;height:152px;border:1px solid #6e6e6e;background:#fff"></div>
<div class="log" style="top:859px;left:240px;letter-spacing:0px">*</div>
<div class="log" style="top:859px;left:254.5px;letter-spacing:0.35px">Elapsed time</div>
<div class="log" style="top:859px;left:343.2px;letter-spacing:0px">:</div>
<div class="log" style="top:859px;left:366.2px;letter-spacing:-0.27px">12.09 s</div>
<div class="log" style="top:859px;left:414px;letter-spacing:0px">*</div>
<div class="log" style="top:898px;left:240px;letter-spacing:0.1px">* * * * * * * * * * * * * * * * * * * *</div>
<div class="log" style="top:958.5px;left:237px;letter-spacing:0.08px">CatesianMesh End<span style="letter-spacing:0.76px">*********************************************</span></div>
<div class="a" style="left:1897px;top:861px;width:15px;height:150px;background:#f0f0f0"></div>
<div class="a" style="left:1897px;top:976px;width:15px;height:18px;background:#cdcdcd"></div>
<svg style="left:1900px;top:866px" width="9" height="142" viewBox="0 0 9 142"><path d="M1 6L4.500 2.500L8 6M1 135L4.500 138.500L8 135" fill="none" stroke="#505050" stroke-width="2"/></svg>
<div class="a" style="left:231px;top:1017px;width:1689px;height:1px;background:#b4b4b4"></div>
<div class="a" style="left:233px;top:1018px;width:47px;height:19px;border:1px solid #d4d4d4;border-top:none;background:#f0f0f0"></div>
<div class="a" style="left:280px;top:1016px;width:77px;height:22px;background:#fff;border:1px solid #e0e0e0;border-top:none"></div>
<div class="t" style="left:243px;top:1017px;font-size:13px">信息</div>
<div class="t" style="left:293px;top:1018px;font-size:13px">进度报告</div>
<div class="a" style="left:0;top:1040px;width:1921px;height:1px;background:#1a1a1a"></div>
</body></html>
